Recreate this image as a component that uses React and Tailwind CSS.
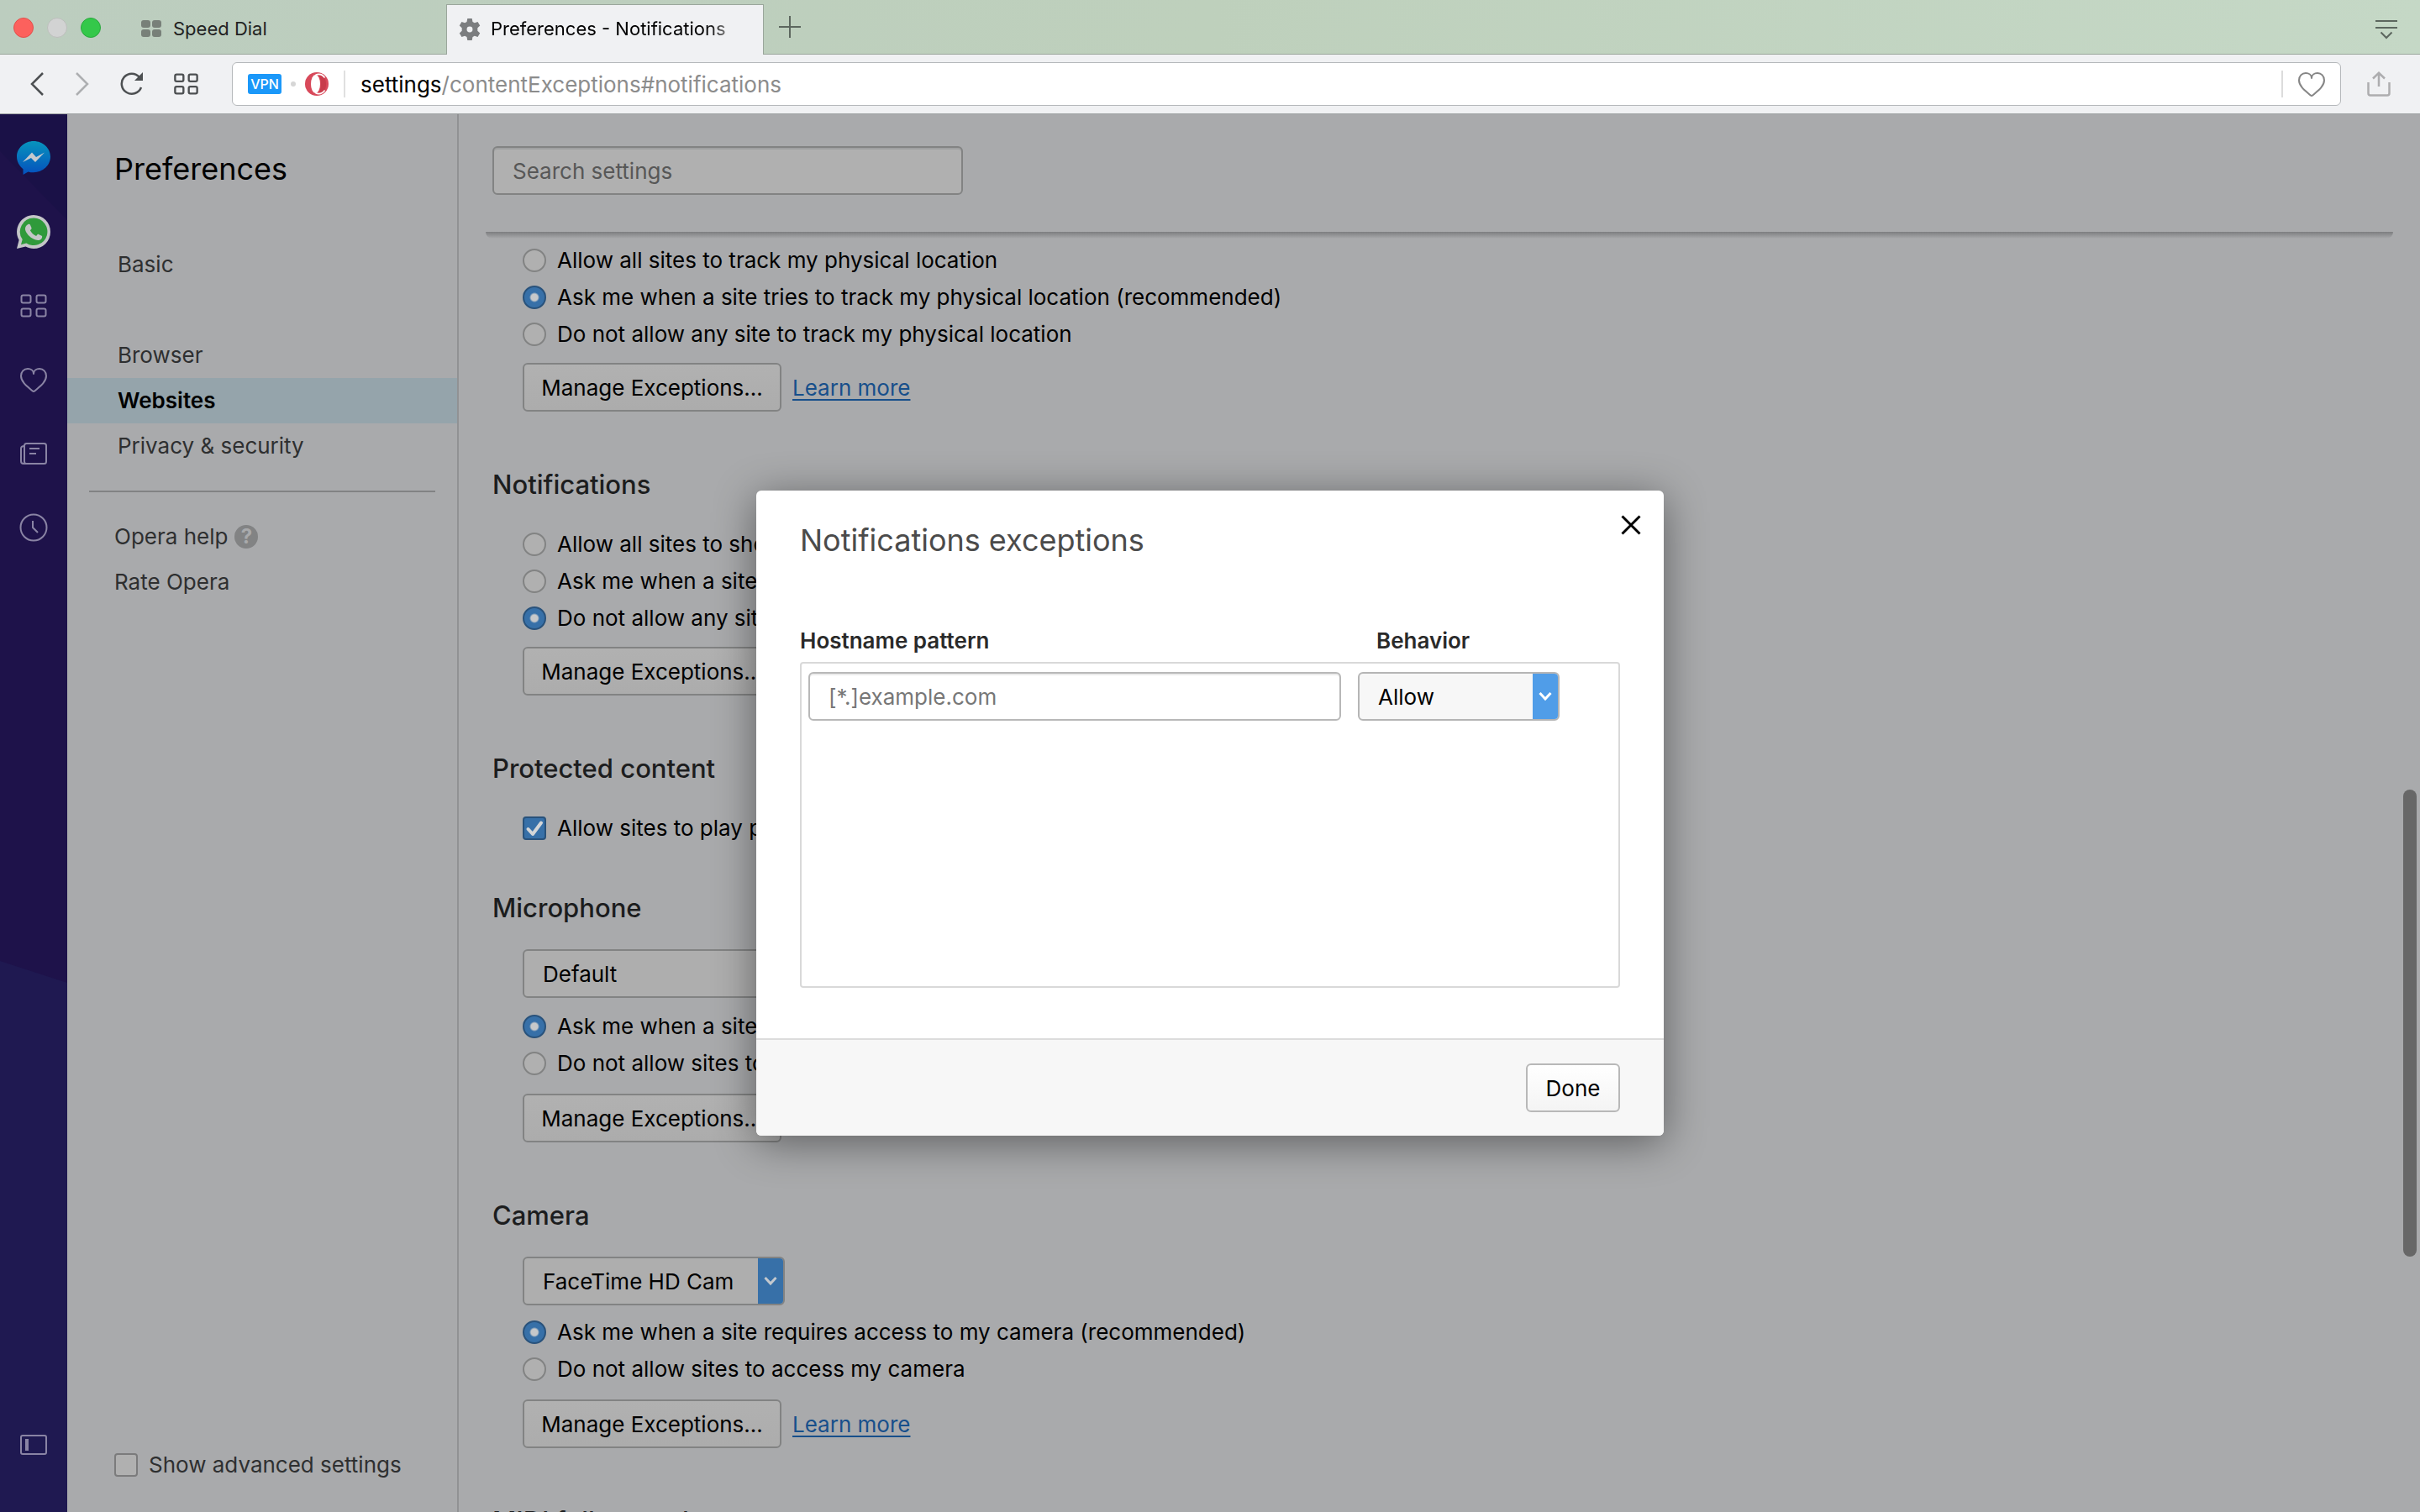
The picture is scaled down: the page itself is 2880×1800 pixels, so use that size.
const BODY = "text-[26px] leading-[44px]";

function Grid({ w = 32, h = 28, stroke = 2 }) {
  return (
    <svg viewBox="0 0 32 28" width={w} height={h} fill="none" stroke="currentColor" strokeWidth={stroke}>
      <rect x="1.500" y="1.500" width="11" height="9" rx="2" />
      <rect x="19.500" y="1.500" width="11" height="9" rx="2" />
      <rect x="1.500" y="17.500" width="11" height="9" rx="2" />
      <rect x="19.500" y="17.500" width="11" height="9" rx="2" />
    </svg>
  );
}

function Heart() {
  return (
    <svg viewBox="0 0 32 29" width="32" height="29" fill="none" stroke="currentColor" strokeWidth="2" strokeLinejoin="round">
      <path d="M16 7C16 3 12.500 1 9 1 4.500 1 1 4.500 1 9.500 1 17 9 22.500 14.500 27.300Q16 28.500 17.500 27.300C23 22.500 31 17 31 9.500 31 4.500 27.500 1 23 1 19.500 1 16 3 16 7Z" />
    </svg>
  );
}

function TabBar() {
  return (
    <header className="flex h-[65px] items-end bg-gradient-to-r from-[#bccdbf] via-[#bed0bc] to-[#c5d8c6] shadow-[inset_0_-1px_0_#9aa69b]">
      <div className="flex h-16 items-center gap-4 pl-4">
        <button aria-label="Close window" className="size-6 rounded-full border border-[#e2504c] bg-[#fc615d]" />
        <button aria-label="Minimize window" className="size-6 rounded-full border border-[#bcbfbc] bg-[#d2d3d3]" />
        <button aria-label="Zoom window" className="size-6 rounded-full border border-[#2aa83d] bg-[#34c84a]" />
      </div>
      <button className="ml-12 flex h-16 w-[363px] items-center gap-3.5 pt-0.5 text-[22px] text-[#222]">
        <svg viewBox="0 0 24 20" width="24" height="20" fill="#788079">
          <rect width="11" height="9" rx="3" />
          <rect x="13" width="11" height="9" rx="3" />
          <rect y="11" width="11" height="9" rx="3" />
          <rect x="13" y="11" width="11" height="9" rx="3" />
        </svg>
        Speed Dial
      </button>
      <button className="flex h-[60px] w-[378px] items-center gap-3 overflow-hidden whitespace-nowrap border border-b-0 border-[#9aa69b] bg-[#f0f1f3] pb-0.5 pl-3.5 text-[22px] text-black">
        <svg viewBox="0 0 24 24" width="26" height="26" className="shrink-0" fill="#7b7d7f">
          <path fillRule="evenodd" d="M9.500 0h5l.7 3.600 2.200 1.200 3.400-1.200 2.500 4.300-2.700 2.400v3.400l2.700 2.400-2.500 4.300-3.400-1.200-2.200 1.200-.7 3.600h-5l-.7-3.600-2.200-1.200-3.400 1.200L.7 16.100l2.700-2.400v-3.400L.7 7.900l2.500-4.300 3.400 1.200 2.200-1.200zM12 8.800a3.200 3.200 0 1 0 0 6.400 3.200 3.200 0 0 0 0-6.400z" />
        </svg>
        <span className="bg-gradient-to-r from-black from-90% to-[#777] bg-clip-text text-transparent">Preferences - Notifications</span>
      </button>
      <button aria-label="New tab" className="ml-[17px] flex h-16 items-center pb-0.5 text-[#5c665e]">
        <svg viewBox="0 0 28 28" width="28" height="28" fill="none" stroke="currentColor" strokeWidth="2"><path d="M14 1v26M1 14h26" /></svg>
      </button>
      <button aria-label="Tab menu" className="ml-auto mr-[26px] flex h-16 items-center pt-1 text-[#5c665e]">
        <svg viewBox="0 0 28 24" width="28" height="24" fill="none" stroke="currentColor" strokeWidth="2"><path d="M1 2h26M1 10h26M7.500 15.500 14 22l6.500-6.500" /></svg>
      </button>
    </header>
  );
}

function Toolbar() {
  return (
    <div className="flex h-[71px] items-center border-b border-[#9fa3a3] bg-[#f0f1f3] text-[#4d5052]">
      <button aria-label="Back" className="ml-8 w-[54px]">
        <svg viewBox="0 0 24 28" width="24" height="28" fill="none" stroke="currentColor" strokeWidth="2.500"><path d="M19 1 6 14l13 13" /></svg>
      </button>
      <button aria-label="Forward" className="w-[54px] text-[#adafb1]">
        <svg viewBox="0 0 24 28" width="24" height="28" fill="none" stroke="currentColor" strokeWidth="2.500"><path d="M5 1 18 14 5 27" /></svg>
      </button>
      <button aria-label="Reload" className="w-[67px] pl-[3px]">
        <svg viewBox="0 0 28 28" width="28" height="28" fill="none" stroke="currentColor" strokeWidth="2.500"><path d="M25 18A12 12 0 1 1 23 6" /><path d="M27 0v10H17z" fill="currentColor" stroke="none" /></svg>
      </button>
      <button aria-label="Speed Dial">
        <Grid w={29} h={26} stroke={2.6} />
      </button>
      <div className="ml-10 flex h-[52px] flex-1 items-center rounded-md border border-[#b5b8bb] bg-white">
        <button className="ml-[18px] h-6 w-10 rounded-[3px] bg-[#1b98f9] text-center text-[16px] leading-6 font-medium text-white">VPN</button>
        <span className="ml-[11px] size-1.5 rounded-full bg-[#d6d6d6]" />
        <svg viewBox="0 0 28 28" width="28" height="28" className="ml-[11px]">
          <circle cx="14" cy="14" r="14" fill="#d8495a" />
          <path fill="#c83c4b" d="M16 4c8 0 9 5 9 10s-1 10-9 10c2-2 3-6 3-10s-1-8-3-10z" />
          <path fill="none" stroke="#fff" strokeWidth="1.500" d="M12.500 3.200c5-2 9 .5 11 3.300M12.500 24.800c5 2 9-.5 11-3.300" />
          <ellipse cx="12.500" cy="14" rx="5.500" ry="11" fill="#fff" />
        </svg>
        <span className="ml-[18px] h-8 w-0.5 bg-[#e0e0e0]" />
        <div className="ml-[18px] flex-1 text-[26px] text-[#8c8c8c]"><span className="text-black">settings</span>/contentExceptions#notifications</div>
        <span className="h-8 w-0.5 bg-[#dcdcdc]" />
        <button aria-label="Add to bookmarks" className="mx-[18px] text-[#858585]"><Heart /></button>
      </div>
      <button aria-label="Share" className="mr-[35px] ml-[31px] text-[#adadaf]">
        <svg viewBox="0 0 28 30" width="28" height="30" fill="none" stroke="currentColor" strokeWidth="2.500"><path d="M1.500 13v13q0 2.500 2.500 2.500h20q2.500 0 2.500-2.500V13M14 18V2M7 8.500 14 1.800l7 6.700" /></svg>
      </button>
    </div>
  );
}

function Sidebar() {
  const btn = "flex h-[88px] w-full items-center justify-center";
  return (
    <aside className="relative flex w-20 shrink-0 flex-col bg-[#1e124a] text-[#8a84a4]">
      <svg className="absolute inset-0 size-full" preserveAspectRatio="none" viewBox="0 0 80 1664">
        <path d="M0 0h80v126L0 44z" fill="#1a1147" />
        <path d="M0 1008l80 26v630H0z" fill="#1f1951" />
      </svg>
      <nav className="relative flex flex-1 flex-col pt-2">
        <button aria-label="Messenger" className={btn}>
          <svg viewBox="0 0 40 40" width="40" height="40">
            <defs><linearGradient id="m" x1="0" y1="0" x2="0" y2="1"><stop offset="0" stopColor="#0794bd" /><stop offset="1" stopColor="#0550bd" /></linearGradient></defs>
            <path fill="url(#m)" d="M20 0C9 0 0 8.300 0 18.600 0 24.500 3 29.800 7.500 33.200V40l6-3.600c2 .6 4.200.8 6.500.8 11 0 20-8.300 20-18.600S31 0 20 0z" />
            <path fill="#c5c9ce" d="M7 25 18 13.500l5 5.500L33 13.500 22 25l-5-5z" />
          </svg>
        </button>
        <button aria-label="WhatsApp" className={btn}>
          <svg viewBox="0 0 40 40" width="40" height="40">
            <path fill="#c4c6c8" d="M20 0a20 20 0 0 1 0 40c-3.500 0-6.500-.8-9.500-2.400L0 40l2.600-10.200A20 20 0 0 1 20 0z" />
            <path fill="#2f9a3b" d="M20.300 3.500a16.300 16.300 0 1 1-9 30L5 35.200l1.700-6.200A16.300 16.300 0 0 1 20.300 3.500z" />
            <path fill="#c4c6c8" d="M13.500 11c.8-.5 2-.4 2.400.5l1.600 3.700c.3.800-.1 1.400-1.600 3 1.500 3 4 5.300 7.200 6.700 1.600-2 2-2.400 2.800-2l3.800 1.900c.7.400.6 2-.2 3.200-1.400 2-4.200 2.500-7 1.600-5.500-1.800-10-6-12-10.600-1.200-3-.300-6.500 3-8z" />
          </svg>
        </button>
        <button aria-label="Speed Dial" className={btn}><Grid /></button>
        <button aria-label="Bookmarks" className={btn}><Heart /></button>
        <button aria-label="News" className={btn}>
          <svg viewBox="0 0 32 26" width="32" height="26" fill="none" stroke="currentColor" strokeWidth="2"><rect x="5" y="1" width="26" height="24" rx="2.500" /><path d="M5 4Q1 4 1 7v15q0 3 3 3h5M5 4v15M11 7h12M11 13h8" /></svg>
        </button>
        <button aria-label="History" className={btn}>
          <svg viewBox="0 0 34 34" width="34" height="34" fill="none" stroke="currentColor" strokeWidth="2"><circle cx="17" cy="17" r="15.500" /><path d="M16 9v8l6 6" /></svg>
        </button>
        <button aria-label="Sidebar setup" className="mt-auto mb-9 flex h-[88px] w-full items-center justify-center">
          <svg viewBox="0 0 32 24" width="32" height="24" fill="none" stroke="currentColor" strokeWidth="2"><rect x="1" y="1" width="30" height="22" rx="2" /><path d="M8 5v14" strokeWidth="4" /></svg>
        </button>
      </nav>
    </aside>
  );
}

function CheckBox({ id, checked, children, className = "" }) {
  return (
    <label htmlFor={id} className={"flex items-center gap-[13px] " + BODY + " " + className}>
      <span className="grid">
        <input id={id} type="checkbox" defaultChecked={checked} className="col-start-1 row-start-1 size-7 appearance-none rounded border-2 border-[#7b7b7c] bg-[#b0b0b0] checked:border-[#29527b] checked:bg-[#3770a8]" />
        {checked && (
          <svg viewBox="0 0 28 28" className="pointer-events-none col-start-1 row-start-1 size-7" fill="none" stroke="#d4d6d8" strokeWidth="4" strokeLinecap="round" strokeLinejoin="round"><path d="M6.500 15l5.500 6L22 7.500" /></svg>
        )}
      </span>
      {children}
    </label>
  );
}

function Preferences() {
  const row = "block h-[54px] pl-[60px] text-[26px] leading-[54px]";
  return (
    <aside className="flex w-[466px] shrink-0 flex-col border-r-2 border-[#919294] text-[#2e2f30]">
      <h1 className="mt-10 pl-14 text-[36px] leading-[50px] text-black">Preferences</h1>
      <nav className="mt-[62px]">
        <a href="#basic" className={row}>Basic</a>
        <a href="#browser" className={row + " mt-[54px]"}>Browser</a>
        <a href="#websites" className={row + " bg-[#95a4ab] font-semibold text-black"}>Websites</a>
        <a href="#privacy" className={row}>Privacy &amp; security</a>
      </nav>
      <hr className="mx-[26px] mt-[26px] border-t-2 border-[#828384]" />
      <nav className="mt-[26px] pl-14 text-[26px] leading-[54px]">
        <a href="#help" className="flex items-center gap-2">
          Opera help
          <span className="size-7 rounded-full bg-[#828384] text-center text-[24px] leading-7 font-bold text-[#a9aaac]">?</span>
        </a>
        <a href="#rate" className="block">Rate Opera</a>
      </nav>
      <CheckBox id="advanced" className="mt-auto mb-[34px] pl-14">Show advanced settings</CheckBox>
    </aside>
  );
}

function Radios({ name, options, selected, className = "" }) {
  return (
    <div className={className}>
      {options.map((o, i) => (
        <label key={o} className={"flex items-center gap-[13px] whitespace-nowrap " + BODY}>
          <input type="radio" name={name} defaultChecked={i === selected} className="size-7 shrink-0 appearance-none rounded-full border-2 border-[#828383] bg-[#b0b0b0] checked:border-[#29527b] checked:bg-[radial-gradient(circle,#c6c8ca_4px,#3770a8_6px)]" />
          {o}
        </label>
      ))}
    </div>
  );
}

function Manage({ learn, className = "" }) {
  return (
    <div className={"flex items-center gap-[13px] text-[26px] " + className}>
      <button className="h-[58px] w-[308px] rounded-md border-2 border-[#828383] bg-gradient-to-b from-[#b1b1b1] to-[#acacac] whitespace-nowrap">Manage Exceptions...</button>
      {learn && <a href="#learn" className="text-[#174f8b] underline decoration-2 underline-offset-4">Learn more</a>}
    </div>
  );
}

function Dropdown({ label, value, dim, className }) {
  return (
    <div className={"grid h-[58px] overflow-hidden rounded-md border-2 " + (dim ? "border-[#828383] bg-[#aeaeae] " : "border-[#b5b5b5] bg-[#f7f7f7] ") + className}>
      <select aria-label={label} className="col-start-1 row-start-1 appearance-none pl-[22px] text-[26px] text-black">
        <option>{value}</option>
      </select>
      <span className={"pointer-events-none col-start-1 row-start-1 flex w-[30px] items-center justify-center justify-self-end " + (dim ? "bg-[#3770a8] text-[#c4c9ce]" : "bg-[#509de8] text-white")}>
        <svg viewBox="0 0 16 12" width="16" height="12" fill="none" stroke="currentColor" strokeWidth="3"><path d="M1.500 2 8 9l6.500-7" /></svg>
      </span>
    </div>
  );
}

function Section({ title, children, className = "" }) {
  return (
    <section className={className}>
      <h2 className="text-[31px] leading-[44px] font-medium text-[#1c1d1e]">{title}</h2>
      <div className="mt-[27px] pl-9">{children}</div>
    </section>
  );
}

function Content() {
  return (
    <main className="flex min-w-0 flex-1 flex-col text-black">
      <div className="ml-8 h-[140px] pt-[38px] pl-2">
        <input type="search" placeholder="Search settings" aria-label="Search settings" className="h-[58px] w-[560px] rounded-md border-2 border-[#828383] bg-[#b0b0b0] px-[22px] text-[26px] shadow-[inset_0_2px_0_#9fa0a1] placeholder:text-[#575757]" />
      </div>
      <div className="mr-8 ml-8 h-2 rounded-b-lg bg-gradient-to-b from-[#7d7e80] to-[#a9aaac]" />
      <div className="mt-1 flex-1 overflow-hidden pl-10">
        <div className="pl-9">
          <Radios name="location" selected={1} options={["Allow all sites to track my physical location", "Ask me when a site tries to track my physical location (recommended)", "Do not allow any site to track my physical location"]} />
          <Manage learn className="mt-3" />
        </div>
        <Section title="Notifications" className="mt-[65px]">
          <Radios name="notifications" selected={2} options={["Allow all sites to show notifications", "Ask me when a site wants to show notifications", "Do not allow any site to show notifications"]} />
          <Manage className="mt-3" />
        </Section>
        <Section title="Protected content" className="mt-[65px]">
          <CheckBox id="protected" checked>Allow sites to play protected content</CheckBox>
        </Section>
        <Section title="Microphone" className="mt-[51px]">
          <Dropdown dim label="Microphone" value="Default" className="w-[312px]" />
          <Radios name="microphone" selected={0} className="mt-3" options={["Ask me when a site requires access to my microphone", "Do not allow sites to access my microphone"]} />
          <Manage className="mt-3.5" />
        </Section>
        <Section title="Camera" className="mt-[65px]">
          <Dropdown dim label="Camera" value="FaceTime HD Cam" className="w-[312px]" />
          <Radios name="camera" selected={0} className="mt-2.5" options={["Ask me when a site requires access to my camera (recommended)", "Do not allow sites to access my camera"]} />
          <Manage learn className="mt-3.5" />
        </Section>
        <Section title="MIDI full control" className="mt-[65px]" />
      </div>
    </main>
  );
}

function ExceptionsDialog() {
  return (
    <div role="dialog" aria-labelledby="dialog-title" className="flex w-[1080px] flex-col rounded-md bg-white text-[26px] shadow-[0_8px_50px_rgba(0,0,0,0.45)]">
      <div className="flex items-start justify-between pl-[52px]">
        <h2 id="dialog-title" className="mt-[34px] text-[36px] leading-[50px] text-[#4b4b4b]">Notifications exceptions</h2>
        <button aria-label="Close" className="mt-[29px] mr-[27px]">
          <svg viewBox="0 0 24 24" width="24" height="24" fill="none" stroke="#000" strokeWidth="3"><path d="M1.500 1.500l21 21M22.500 1.500l-21 21" /></svg>
        </button>
      </div>
      <div className="mt-[73px] flex px-[52px] leading-[44px] font-semibold text-[#2a2a2a]">
        <label htmlFor="host" className="w-[686px]">Hostname pattern</label>
        <span>Behavior</span>
      </div>
      <div className="mx-[52px] mt-[3px] flex h-[388px] items-start gap-5 rounded border-2 border-[#d9d9d9] px-2 pt-2.5">
        <input id="host" placeholder="[*.]example.com" className="h-[58px] w-[634px] rounded-md border-2 border-[#b8b8b8] px-[22px] shadow-[inset_0_2px_0_#ececec] placeholder:text-[#777]" />
        <Dropdown label="Behavior" value="Allow" className="w-60" />
      </div>
      <div className="mt-[60px] flex justify-end rounded-b-md border-t-2 border-[#dcdcdc] bg-[#f7f7f7] px-[52px] py-7">
        <button className="h-[58px] w-28 rounded-md border-2 border-[#b8b8b8] bg-gradient-to-b from-white to-[#f4f4f4]">Done</button>
      </div>
    </div>
  );
}

export default function App() {
  return (
    <div className="flex h-screen flex-col overflow-hidden bg-[#a9aaac] font-['Inter',sans-serif]">
      <TabBar />
      <Toolbar />
      <div className="relative flex min-h-0 flex-1">
        <Sidebar />
        <Preferences />
        <Content />
        <div className="absolute top-[804px] right-1 h-[556px] w-4 rounded-full bg-[#676767]" />
        <div className="absolute inset-0 flex items-center justify-center">
          <ExceptionsDialog />
        </div>
      </div>
    </div>
  );
}
